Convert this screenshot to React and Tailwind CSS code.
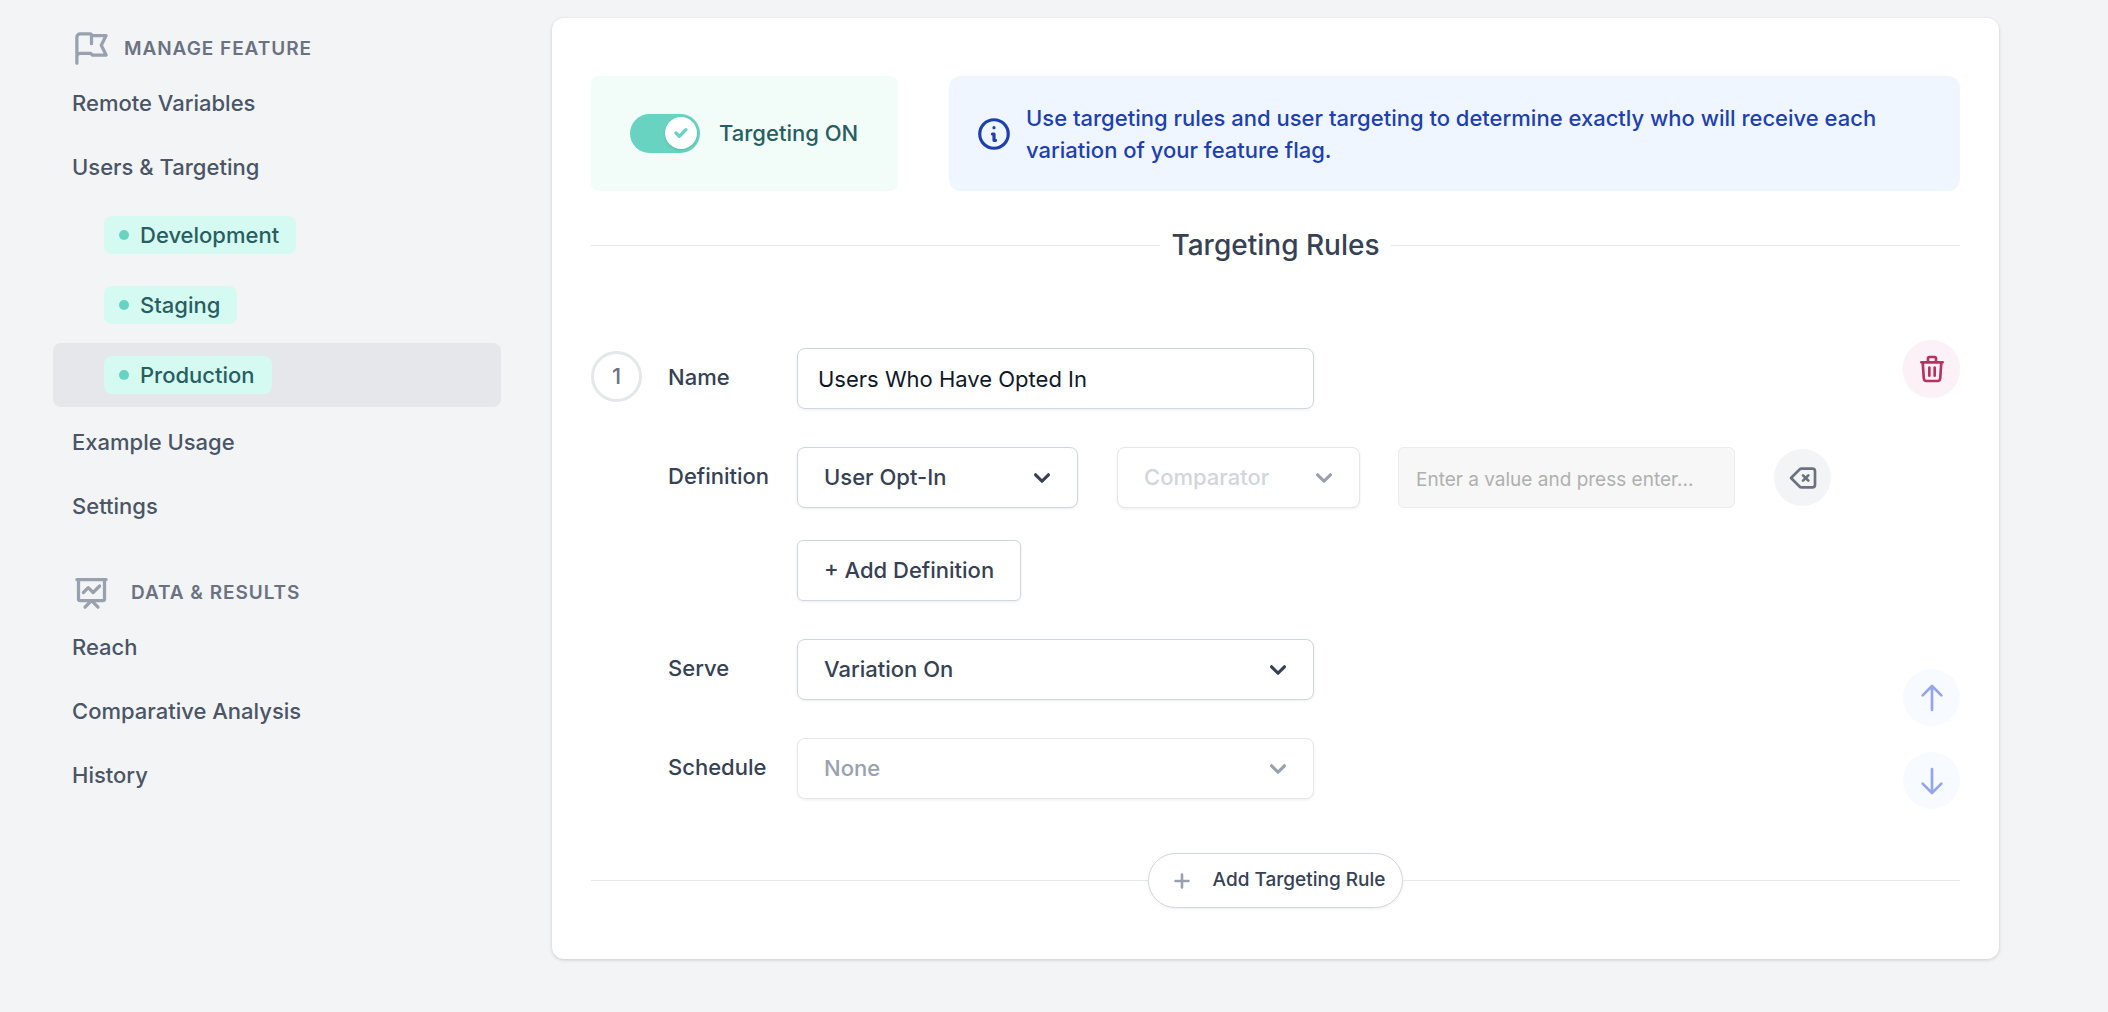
import React, { useState } from "react";

function Icon({ className, strokeWidth = 2, children }) {
  return (
    <svg
      className={className}
      viewBox="0 0 24 24"
      fill="none"
      stroke="currentColor"
      strokeWidth={strokeWidth}
      strokeLinecap="round"
      strokeLinejoin="round"
      aria-hidden="true"
    >
      {children}
    </svg>
  );
}

function NavHeader({ icon, children, wide }) {
  return (
    <h2
      className={
        "mb-[3px] flex items-center pl-[19px] text-[19px] leading-8 font-semibold tracking-wider text-gray-500 uppercase " +
        (wide ? "gap-5" : "gap-[13px]")
      }
    >
      <span className="text-gray-400">{icon}</span>
      {children}
    </h2>
  );
}

function NavLink({ children }) {
  return (
    <a href="#" className="flex h-16 items-center rounded-lg px-[19px] text-[22px] leading-8 font-medium text-gray-600">
      {children}
    </a>
  );
}

function EnvLink({ children, active }) {
  return (
    <a
      href="#"
      aria-current={active ? "page" : undefined}
      className={"flex h-16 items-center rounded-lg pl-[51px] " + (active ? "bg-gray-200" : "")}
    >
      <span className="flex items-center gap-[11px] rounded-lg bg-[#d5faf1] py-1 pr-[17px] pl-[15px] text-[22px] leading-[30px] font-medium text-[#285e61]">
        <span className="size-[10px] rounded-full bg-[#68d3c0]" />
        {children}
      </span>
    </a>
  );
}

const fieldShadow = "shadow-[0_1px_3px_rgba(0,0,0,0.07)]";

function SelectBox({ id, value, label, disabled, className, textClass }) {
  return (
    <div className={"relative " + className}>
      <select
        id={id}
        aria-label={label}
        disabled={disabled}
        defaultValue={value}
        className={
          "h-[61px] w-full appearance-none rounded-lg border bg-white pr-14 pl-[26px] text-[22px] font-medium opacity-100 " +
          fieldShadow +
          (disabled ? " border-gray-200 " : " border-gray-300 ") +
          textClass
        }
      >
        <option>{value}</option>
      </select>
      <svg
        viewBox="0 0 20 20"
        fill="currentColor"
        aria-hidden="true"
        className={
          "pointer-events-none absolute inset-y-0 right-5 my-auto size-8 " +
          (disabled ? "text-gray-400" : "text-gray-700")
        }
      >
        <path
          fillRule="evenodd"
          clipRule="evenodd"
          d="M5.293 7.293a1 1 0 011.414 0L10 10.586l3.293-3.293a1 1 0 111.414 1.414l-4 4a1 1 0 01-1.414 0l-4-4a1 1 0 010-1.414z"
        />
      </svg>
    </div>
  );
}

function RoundButton({ label, className, children }) {
  return (
    <button
      type="button"
      aria-label={label}
      className={"flex size-[57px] shrink-0 items-center justify-center rounded-full " + className}
    >
      {children}
    </button>
  );
}

const labelClass = "w-[129px] shrink-0 pb-1 text-[22px] leading-8 font-medium text-gray-700";

export default function App() {
  const [targeting, setTargeting] = useState(true);

  return (
    <div className="flex min-h-screen items-start bg-gray-100 font-['Inter',sans-serif]">
      <nav aria-label="Feature" className="w-[501px] shrink-0 pt-[29px] pl-[53px]">
        <NavHeader
          icon={
            <Icon className="size-[39px]">
              <path d="M3 21v-4m0 0V5a2 2 0 012-2h6.500l1 1H21l-3 6 3 6h-8.500l-1-1H5a2 2 0 00-2 2zm9-13.500V9" />
            </Icon>
          }
        >
          Manage Feature
        </NavHeader>
        <NavLink>Remote Variables</NavLink>
        <NavLink>Users &amp; Targeting</NavLink>
        <div className="flex flex-col gap-[6px] pt-1 pb-[3px]">
          <EnvLink>Development</EnvLink>
          <EnvLink>Staging</EnvLink>
          <EnvLink active>Production</EnvLink>
        </div>
        <NavLink>Example Usage</NavLink>
        <NavLink>Settings</NavLink>
        <div className="pt-[35px]">
          <NavHeader
            wide
            icon={
              <Icon className="size-[39px]">
                <path d="M7 12l3-3 3 3 4-4M8 21l4-4 4 4M3 4h18M4 4h16v12a1 1 0 01-1 1H5a1 1 0 01-1-1V4z" />
              </Icon>
            }
          >
            Data &amp; Results
          </NavHeader>
        </div>
        <NavLink>Reach</NavLink>
        <NavLink>Comparative Analysis</NavLink>
        <NavLink>History</NavLink>
      </nav>

      <main className="mt-[18px] mr-[109px] mb-[53px] ml-[51px] flex-1 rounded-xl bg-white px-[39px] pt-[58px] pb-[51px] shadow-[0_1px_4px_rgba(0,0,0,0.1),0_1px_3px_rgba(0,0,0,0.08)]">
        <div className="flex gap-[51px]">
          <label className="flex w-[307px] shrink-0 items-center gap-[19px] rounded-lg bg-[#f2fcf9] pl-[39px] text-[22px] font-medium text-[#285e61]">
            <span className="relative flex shrink-0">
              <input
                type="checkbox"
                role="switch"
                checked={targeting}
                onChange={(e) => setTargeting(e.target.checked)}
                className="peer h-[39px] w-[70px] appearance-none rounded-full bg-gray-300 checked:bg-[#68d3c0]"
              />
              <span className="pointer-events-none absolute top-[3px] left-[3px] flex size-8 items-center justify-center rounded-full bg-white text-[#68d3c0] shadow-sm peer-checked:left-[35px]">
                <svg viewBox="0 0 12 12" fill="currentColor" className="size-5" aria-hidden="true">
                  <path d="M3.707 5.293a1 1 0 00-1.414 1.414l1.414-1.414zM5 8l-.707.707a1 1 0 001.414 0L5 8zm4.707-3.293a1 1 0 00-1.414-1.414l1.414 1.414zm-7.414 2l2 2 1.414-1.414-2-2-1.414 1.414zm3.414 2l4-4-1.414-1.414-4 4 1.414 1.414z" />
                </svg>
              </span>
            </span>
            Targeting ON
          </label>
          <div className="flex min-w-0 flex-1 items-center gap-[13px] rounded-xl bg-[#eff6ff] pt-[26px] pr-16 pb-[25px] pl-[26px] text-[#1e40af]">
            <Icon className="size-[38px] shrink-0">
              <path d="M13 16h-1v-4h-1m1-4h.01M21 12a9 9 0 11-18 0 9 9 0 0118 0z" />
            </Icon>
            <p className="text-[22px] leading-8 font-medium">
              Use targeting rules and user targeting to determine exactly who will receive each variation of your
              feature flag.
            </p>
          </div>
        </div>

        <div className="mt-9 flex items-center gap-[11px]">
          <div className="h-px flex-1 bg-gray-200" />
          <h1 className="text-[28px] leading-9 font-medium text-gray-700">Targeting Rules</h1>
          <div className="h-px flex-1 bg-gray-200" />
        </div>

        <section className="mt-[77px] flex items-stretch justify-between" aria-label="Rule 1">
          <div className="mt-2 flex items-start">
            <div className="mt-[3px] mr-[26px] flex size-[51px] items-center justify-center rounded-full border-[3px] border-gray-200 text-[22px] font-medium text-gray-500">
              1
            </div>
            <div className="flex flex-col gap-[38px]">
              <div className="flex items-center">
                <label htmlFor="name" className={labelClass}>
                  Name
                </label>
                <input
                  id="name"
                  defaultValue="Users Who Have Opted In"
                  className={"h-[61px] w-[517px] rounded-lg border border-gray-300 px-5 text-[22px] text-gray-900 " + fieldShadow}
                />
              </div>
              <div>
                <div className="flex items-center">
                  <label htmlFor="definition" className={labelClass}>
                    Definition
                  </label>
                  <SelectBox id="definition" value="User Opt-In" className="w-[281px]" textClass="text-gray-700" />
                  <SelectBox
                    disabled
                    label="Comparator"
                    value="Comparator"
                    className="ml-[39px] w-[243px]"
                    textClass="text-gray-300"
                  />
                  <input
                    disabled
                    aria-label="Value"
                    placeholder="Enter a value and press enter..."
                    className="ml-[38px] h-[61px] w-[337px] rounded-md border border-[#ededed] bg-[#f7f7f7] px-[17px] pt-[3px] text-[19px] placeholder:text-[#b0b0b0]"
                  />
                  <RoundButton label="Remove definition" className="ml-[39px] bg-gray-100 text-gray-500">
                    <Icon className="size-8">
                      <path d="M12 14l2-2m0 0l2-2m-2 2l-2-2m2 2l2 2M3 12l6.414 6.414a2 2 0 001.414.586H19a2 2 0 002-2V7a2 2 0 00-2-2h-8.172a2 2 0 00-1.414.586L3 12z" />
                    </Icon>
                  </RoundButton>
                </div>
                <button
                  type="button"
                  className={
                    "mt-8 ml-[129px] h-[61px] rounded-md border border-gray-300 px-[26px] text-[22px] font-medium text-gray-700 " +
                    fieldShadow
                  }
                >
                  + Add Definition
                </button>
              </div>
              <div className="flex items-center">
                <label htmlFor="serve" className={labelClass}>
                  Serve
                </label>
                <SelectBox id="serve" value="Variation On" className="w-[517px]" textClass="text-gray-700" />
              </div>
              <div className="flex items-center">
                <label htmlFor="schedule" className={labelClass}>
                  Schedule
                </label>
                <SelectBox id="schedule" disabled value="None" className="w-[517px]" textClass="text-gray-400" />
              </div>
            </div>
          </div>
          <div className="-mb-[10px] flex flex-col">
            <RoundButton label="Delete rule" className="bg-[#fbf1f6] text-[#b83260] shadow-xs">
              <Icon className="size-8">
                <path d="M19 7l-.867 12.142A2 2 0 0116.138 21H7.862a2 2 0 01-1.995-1.858L5 7m5 4v6m4-6v6m1-10V4a1 1 0 00-1-1h-4a1 1 0 00-1 1v3M4 7h16" />
              </Icon>
            </RoundButton>
            <RoundButton label="Move up" className="mt-auto bg-[#f7faff] text-[#93a5eb]">
              <Icon className="size-8">
                <path d="M5 10l7-7m0 0l7 7m-7-7v18" />
              </Icon>
            </RoundButton>
            <RoundButton label="Move down" className="mt-[26px] bg-[#f7faff] text-[#93a5eb]">
              <Icon className="size-8">
                <path d="M19 14l-7 7m0 0l-7-7m7 7V3" />
              </Icon>
            </RoundButton>
          </div>
        </section>

        <div className="mt-[54px] flex items-center">
          <div className="h-px flex-1 bg-gray-200" />
          <button
            type="button"
            className={
              "flex h-[55px] items-center gap-[18px] rounded-full border border-gray-300 pr-[17px] pl-5 text-[19px] font-medium text-gray-700 " +
              fieldShadow
            }
          >
            <svg viewBox="0 0 20 20" fill="currentColor" className="size-[26px] text-gray-400" aria-hidden="true">
              <path
                fillRule="evenodd"
                clipRule="evenodd"
                d="M10 4a1 1 0 011 1v4h4a1 1 0 110 2h-4v4a1 1 0 11-2 0v-4H5a1 1 0 110-2h4V5a1 1 0 011-1z"
              />
            </svg>
            Add Targeting Rule
          </button>
          <div className="h-px flex-1 bg-gray-200" />
        </div>
      </main>
    </div>
  );
}
